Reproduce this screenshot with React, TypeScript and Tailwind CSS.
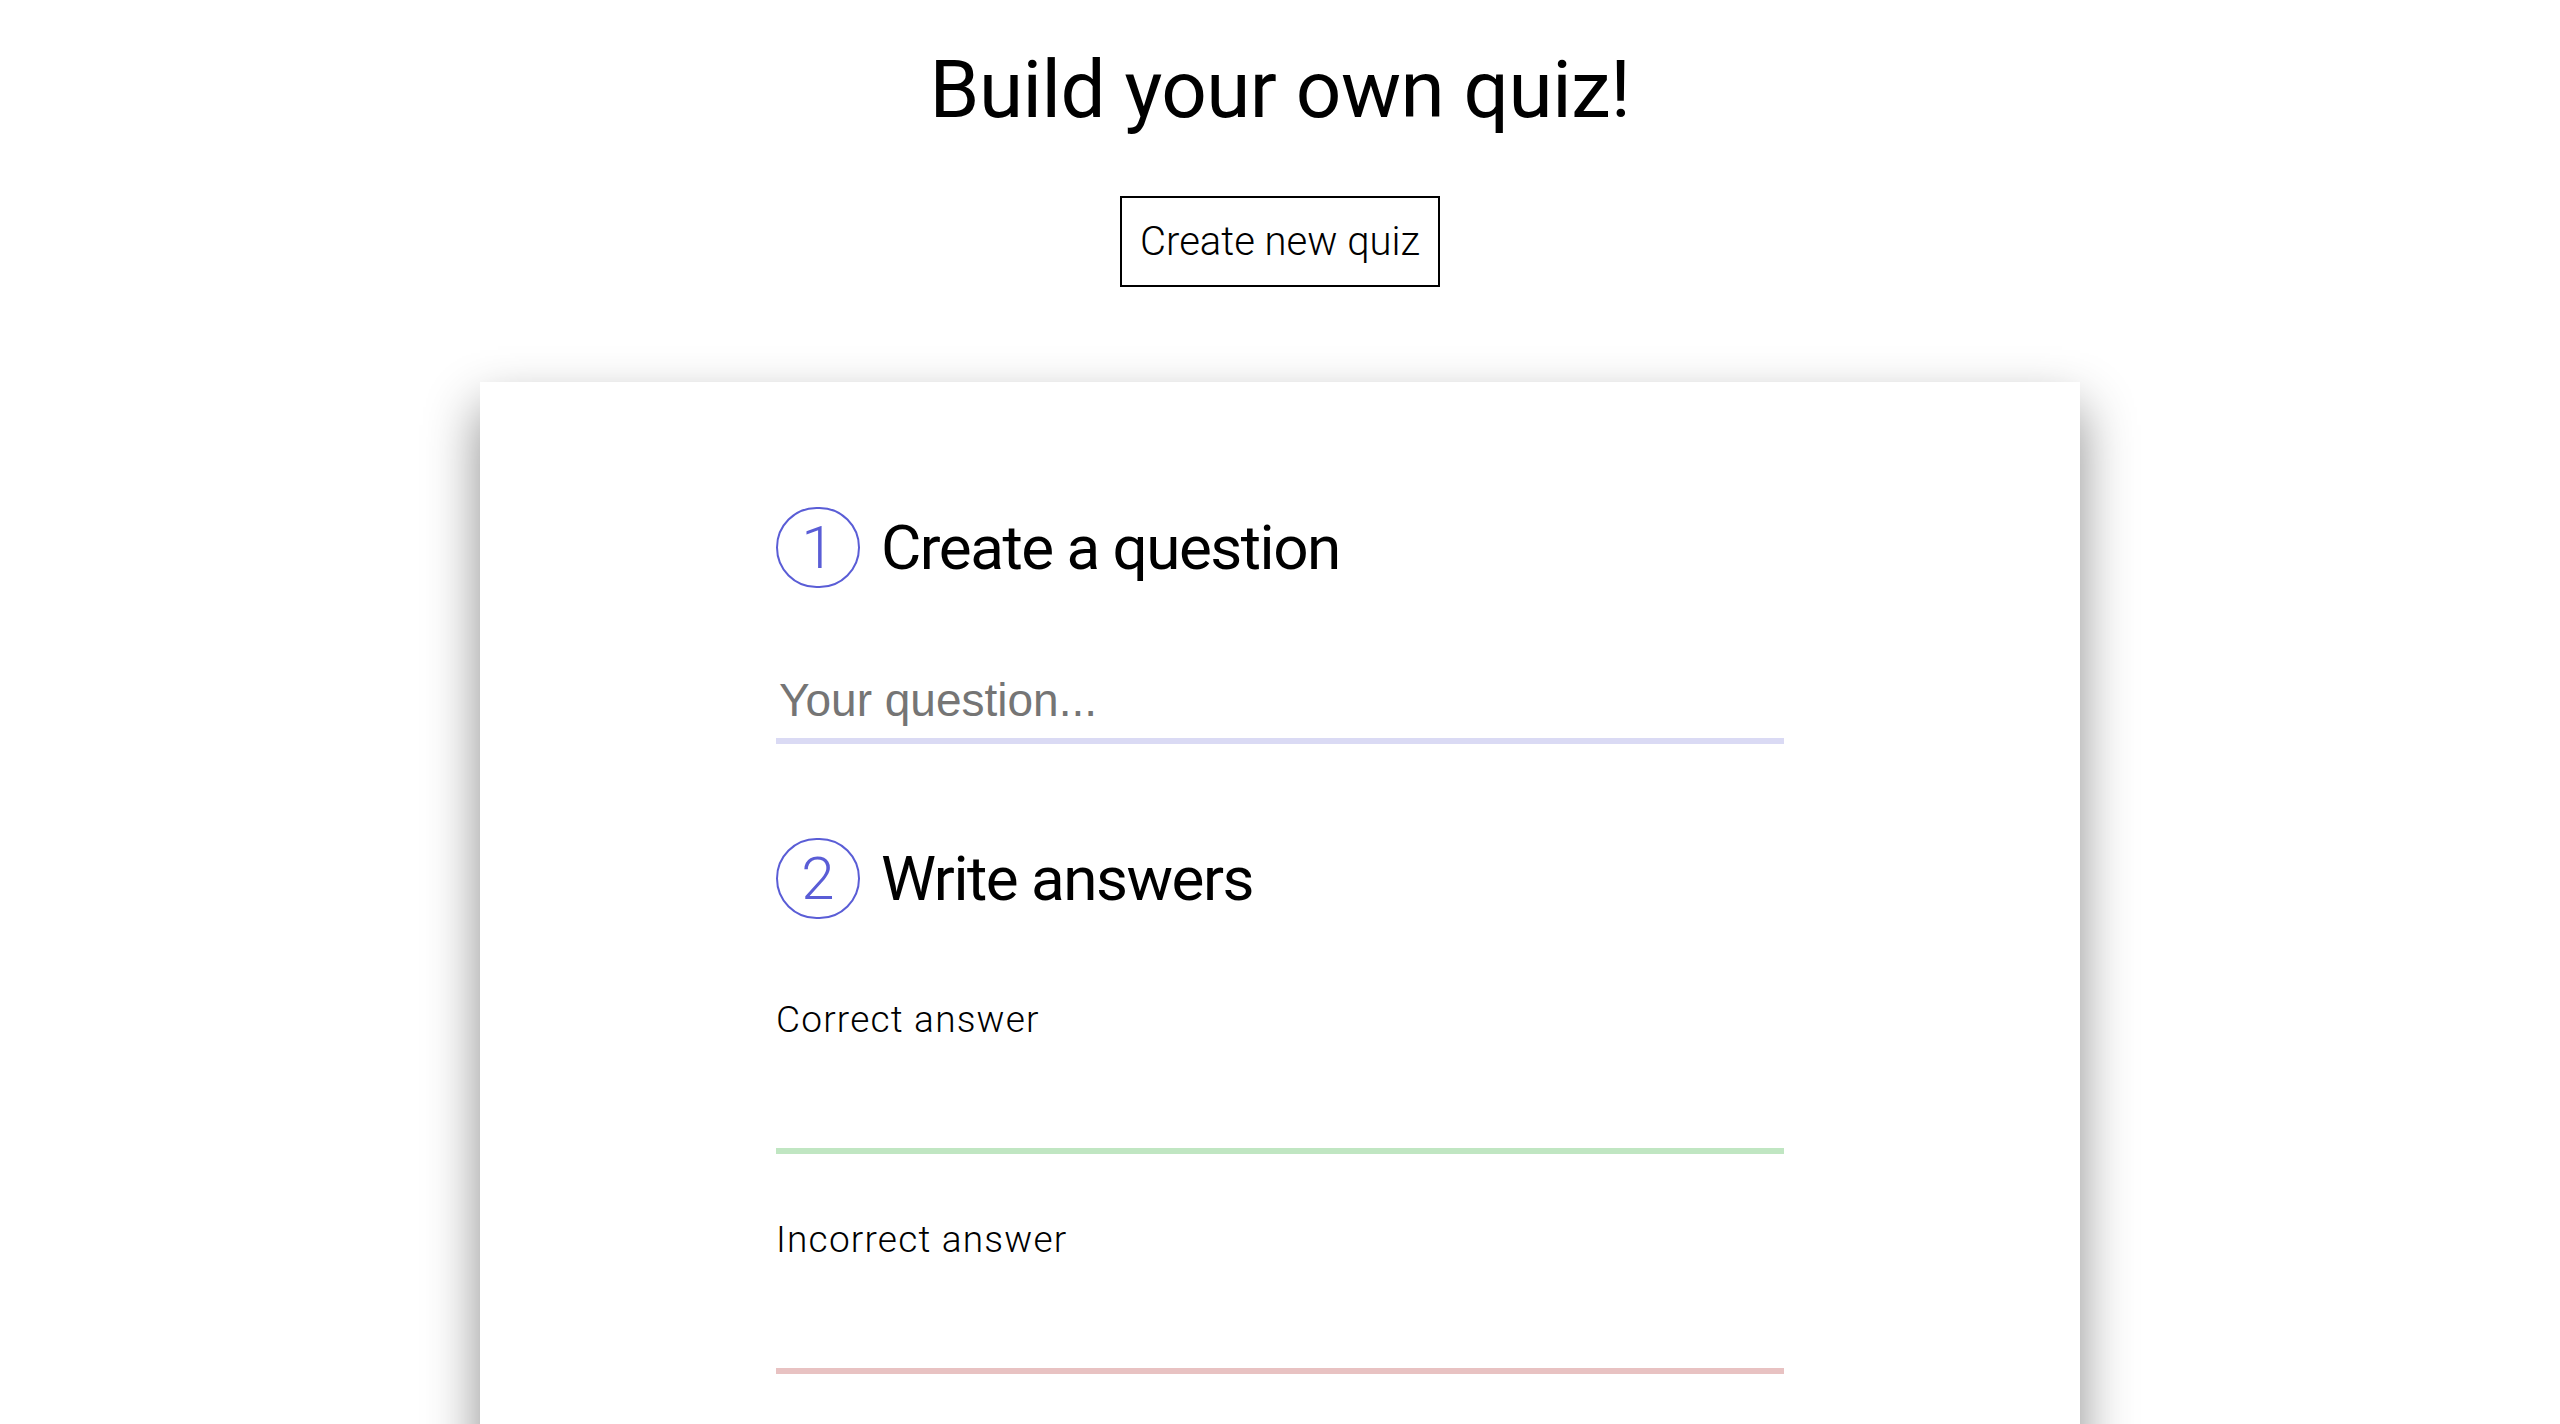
import React from 'react'

function StepHeading({ num, title }: { num: number; title: string }) {
  return (
    <div className="flex items-center">
      <span className="flex h-[81px] w-[84px] shrink-0 items-center justify-center rounded-full border-2 border-[#5a5dd6] text-[60px] font-light leading-none text-[#5a5dd6]">
        {num}
      </span>
      <h2 className="ml-[21px] text-[62px] font-normal leading-[73px] tracking-[-1.5px] text-black">
        {title}
      </h2>
    </div>
  )
}

function AnswerField({ label, line }: { label: string; line: string }) {
  return (
    <div>
      <label className="block text-[37px] font-light leading-[41px] tracking-[1.2px] text-black">
        {label}
      </label>
      <input
        type="text"
        className={'block h-[114px] w-full border-b-[6px] bg-transparent px-[4px] text-[40px] outline-none ' + line}
      />
    </div>
  )
}

export default function App() {
  return (
    <div className="h-screen overflow-hidden bg-white font-['Roboto',sans-serif] text-black">
      <div className="flex flex-col items-center pt-[42px]">
        <h1 className="text-[80px] font-normal leading-[96px] tracking-[-0.5px]">Build your own quiz!</h1>
        <button className="mt-[58px] flex h-[91px] items-center border-2 border-black px-[18px] text-[40px] font-light">
          Create new quiz
        </button>
      </div>

      <div className="mx-auto mt-[95px] w-[1600px] bg-white pt-[125px] pb-[200px] shadow-[0_25px_50px_rgba(0,0,0,0.45)]">
        <div className="mx-auto w-[1008px]">
          <StepHeading num={1} title="Create a question" />

          <input
            type="text"
            placeholder="Your question..."
            className="mt-[74px] block h-[82px] w-full border-b-[6px] border-[#dadaf4] bg-transparent px-[3px] font-['Liberation_Sans',Arial,sans-serif] text-[46px] outline-none placeholder:text-[#757575]"
          />

          <div className="mt-[94px]">
            <StepHeading num={2} title="Write answers" />
          </div>

          <div className="mt-[80px] flex flex-col gap-[65px]">
            <AnswerField label="Correct answer" line="border-[#c0e6c2]" />
            <AnswerField label="Incorrect answer" line="border-[#e8c2c2]" />
          </div>
        </div>
      </div>
    </div>
  )
}
